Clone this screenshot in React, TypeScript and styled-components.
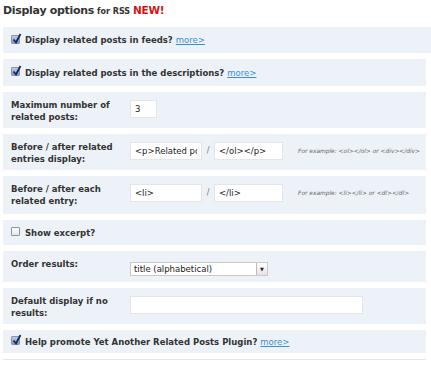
import React from 'react'
import styled, { createGlobalStyle } from 'styled-components'

const Global = createGlobalStyle`
  html, body { margin: 0; padding: 0; background: #fff; }
  body { font-family: "DejaVu Sans", Verdana, sans-serif; color: #333; }
`

const Page = styled.div`
  width: 431px;
  height: 369px;
  overflow: hidden;
  padding: 3px 5px 0 3px;
  box-sizing: border-box;
`

const Title = styled.h3`
  margin: 0 0 9px 0;
  height: 15px;
  font-size: 11px;
  letter-spacing: -0.3px;
  font-weight: bold;
  color: #333;
  line-height: 15px;
`

const Small = styled.span`
  font-size: 8px;
  letter-spacing: 0;
  margin-left: 3px;
`

const New = styled.span`
  color: #d11;
  font-size: 10.5px;
  margin-left: 3px;
`

const Row = styled.div<{ $h: number; $wide?: boolean }>`
  background: #edf2f8;
  margin-bottom: 6px;
  margin-right: ${p => (p.$wide ? '-5px' : '0')};
  height: ${p => p.$h}px;
  box-sizing: border-box;
  font-size: 8.5px;
  font-weight: bold;
  line-height: 12px;
`

const CheckRow = styled(Row)`
  display: flex;
  align-items: center;
  gap: 5px;
  padding: 0 8px;
`

const FieldRow = styled(Row)`
  display: grid;
  grid-template-columns: 119px 1fr;
  align-items: start;
  padding: 7px 8px 0;
`

const Label = styled.div``

const Controls = styled.div<{ $top?: number }>`
  display: flex;
  align-items: center;
  margin-top: ${p => p.$top ?? 1}px;
`

const Input = styled.input<{ $w: number }>`
  width: ${p => p.$w}px;
  height: 18px;
  box-sizing: border-box;
  border: 1px solid #e2e6ea;
  background: #fff;
  font-family: "DejaVu Sans", Verdana, sans-serif;
  font-size: 8.5px;
  color: #222;
  padding: 0 4px;
  outline: none;
`

const Slash = styled.span`
  font-weight: normal;
  color: #777;
  font-size: 8px;
  width: 12px;
  text-align: center;
`

const Example = styled.span`
  font-style: italic;
  font-weight: normal;
  font-size: 5.9px;
  color: #666;
  margin-left: 15px;
  white-space: nowrap;
`

const Link = styled.a`
  color: #3d8fcb;
  text-decoration: underline;
  font-weight: normal;
  margin-left: 3px;
`

const Box = styled.span<{ $on: boolean }>`
  width: 9px;
  height: 9px;
  flex: none;
  box-sizing: border-box;
  border: 1px solid #8a94a8;
  border-radius: 1px;
  background: ${p => (p.$on ? 'linear-gradient(#b7cbe6, #7e9ed0)' : 'linear-gradient(#fff, #e6e6e6)')};
  position: relative;
  margin-top: -2px;
`

const Tick = styled.svg`
  position: absolute;
  left: 0px;
  top: -3px;
`

const SelectBox = styled.div`
  width: 138px;
  height: 14px;
  box-sizing: border-box;
  border: 1px solid #c9c9c9;
  background: #fff;
  display: flex;
  align-items: center;
  font-weight: normal;
  font-size: 8.5px;
  color: #222;
  padding-left: 3px;
  margin-top: 4px;
`

const SelectText = styled.span`
  flex: 1;
`

const Arrow = styled.span`
  width: 10px;
  height: 12px;
  border-left: 1px solid #bbb;
  background: linear-gradient(#fff, #e4e4e4);
  display: flex;
  align-items: center;
  justify-content: center;
  font-size: 5px;
  color: #222;
`

const Bottom = styled.div`
  border-top: 1px solid #e3e7ec;
  margin-top: 1px;
`

const Check = ({ on }: { on: boolean }) => (
  <Box $on={on}>
    {on && (
      <Tick width="10" height="11" viewBox="0 0 10 11">
        <path d="M1.5 6.5 L4 9.5 L8.5 1" stroke="#1a2a50" strokeWidth="1.8" fill="none" />
      </Tick>
    )}
  </Box>
)

export default function App() {
  return (
    <Page>
      <Global />
      <Title>
        Display options<Small>for RSS</Small><New>NEW!</New>
      </Title>
      <CheckRow $h={26} $wide>
        <Check on />
        <span>Display related posts in feeds?<Link>more&gt;</Link></span>
      </CheckRow>
      <CheckRow $h={27}>
        <Check on />
        <span>Display related posts in the descriptions?<Link>more&gt;</Link></span>
      </CheckRow>
      <FieldRow $h={36}>
        <Label>Maximum number of related posts:</Label>
        <Controls>
          <Input $w={27} defaultValue="3" />
        </Controls>
      </FieldRow>
      <FieldRow $h={36}>
        <Label>Before / after related entries display:</Label>
        <Controls>
          <Input $w={72} defaultValue="<p>Related posts:" />
          <Slash>/</Slash>
          <Input $w={69} defaultValue="</ol></p>" />
          <Example>For example: &lt;ol&gt;&lt;/ol&gt; or &lt;div&gt;&lt;/div&gt;</Example>
        </Controls>
      </FieldRow>
      <FieldRow $h={38}>
        <Label>Before / after each related entry:</Label>
        <Controls>
          <Input $w={72} defaultValue="<li>" />
          <Slash>/</Slash>
          <Input $w={69} defaultValue="</li>" />
          <Example>For example: &lt;li&gt;&lt;/li&gt; or &lt;dl&gt;&lt;/dl&gt;</Example>
        </Controls>
      </FieldRow>
      <CheckRow $h={25}>
        <Check on={false} />
        <span>Show excerpt?</span>
      </CheckRow>
      <FieldRow $h={31}>
        <Label>Order results:</Label>
        <SelectBox>
          <SelectText>title (alphabetical)</SelectText>
          <Arrow>▼</Arrow>
        </SelectBox>
      </FieldRow>
      <FieldRow $h={36}>
        <Label>Default display if no results:</Label>
        <Controls>
          <Input $w={233} defaultValue="" />
        </Controls>
      </FieldRow>
      <CheckRow $h={23}>
        <Check on />
        <span>Help promote Yet Another Related Posts Plugin?<Link>more&gt;</Link></span>
      </CheckRow>
      <Bottom />
    </Page>
  )
}
